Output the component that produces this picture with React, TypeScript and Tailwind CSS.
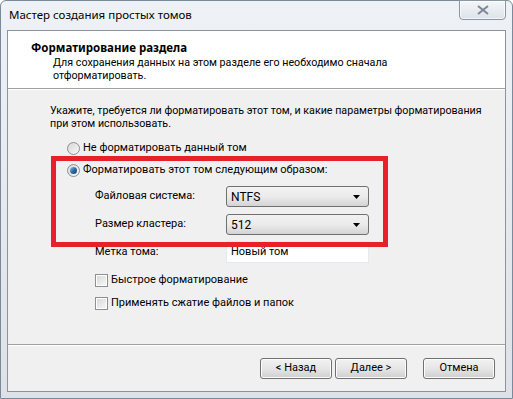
import React from "react";

const font = { fontFamily: 'Roboto, "Noto Sans", Arial, sans-serif' };
const capFont = { fontFamily: '"Noto Sans", "Open Sans", Arial, sans-serif' };

function Radio({ checked }: { checked?: boolean }) {
  return (
    <span className="relative flex h-[13px] w-[13px] shrink-0 items-center justify-center rounded-full border border-[#8e8f8f] bg-gradient-to-br from-[#d7d7d7] to-[#f8f8f8]">
      {checked && (
        <span className="h-[7px] w-[7px] rounded-full bg-gradient-to-br from-[#8fc2e6] via-[#2a6fa3] to-[#173f6b]" />
      )}
    </span>
  );
}

function Check() {
  return (
    <span className="flex h-[13px] w-[13px] shrink-0 items-center justify-center border border-[#8e8f8f] bg-white">
      <span className="h-[9px] w-[9px] bg-gradient-to-br from-[#d9d9d9] to-[#f7f7f7]" />
    </span>
  );
}

function Combo({ value }: { value: string }) {
  return (
    <div className="flex h-[21px] w-[143px] items-center justify-between rounded-[3px] border border-[#707070] bg-gradient-to-b from-[#f2f2f2] via-[#ebebeb] to-[#d4d4d4] pl-[4px] pr-[8px]">
      <span className="text-[12px] text-black">{value}</span>
      <svg width="7" height="4" viewBox="0 0 7 4">
        <path d="M0 0 H7 L3.5 4 Z" fill="#000" />
      </svg>
    </div>
  );
}

function Btn({ label }: { label: string }) {
  return (
    <div className="flex h-[21px] w-[72px] items-center justify-center rounded-[3px] border border-[#707070] bg-gradient-to-b from-[#f2f2f2] via-[#e6e6e6] to-[#cfcfcf] text-black shadow-[inset_0_0_0_1px_#fcfcfc]">
      {label}
    </div>
  );
}

export default function App() {
  return (
    <div style={font} className="h-[399px] w-[513px] overflow-hidden whitespace-nowrap bg-white text-[11px]">
      <div className="flex h-[399px] w-[513px] flex-col rounded-t-[6px] border border-[#7b8a9b] bg-gradient-to-b from-[#eef1f5] via-[#e6eaef] to-[#dde2e8]">
        <div className="flex h-[29px] shrink-0 items-start justify-between">
          <span style={capFont} className="pl-[8px] pt-[6px] text-[11.5px] leading-[16px] text-black">Мастер создания простых томов</span>
          <div className="mr-[6px] mt-[-1px] flex h-[20px] w-[47px] items-center justify-center rounded-b-[4px] border border-[#8b96a3] bg-gradient-to-b from-[#f4f6f8] to-[#dde3ea] shadow-[inset_0_0_0_1px_#ffffffaa]">
            <svg width="12" height="10" viewBox="0 0 12 10">
              <path d="M1 1 L11 9 M11 1 L1 9" stroke="#7d8793" strokeWidth="2" fill="none" />
            </svg>
          </div>
        </div>
        <div className="mx-[6px] mb-[6px] flex flex-1 flex-col border border-[#8d939b] bg-[#f0f0f0]">
          <div className="flex h-[58px] shrink-0 flex-col border-b border-[#a0a0a0] bg-white pl-[23px] pt-[9px]">
            <div style={capFont} className="text-[11.5px] font-bold leading-[16px] text-black">Форматирование раздела</div>
            <div className="pl-[22px] text-[10.7px] leading-[13px] text-black">
              Для сохранения данных на этом разделе его необходимо сначала
              <br />
              отформатировать.
            </div>
          </div>
          <div className="flex flex-1 flex-col border-t border-white pl-[42px] pt-[14px] text-black">
            <div className="text-[10.7px] leading-[13px]">
              Укажите, требуется ли форматировать этот том, и какие параметры форматирования
              <br />
              при этом использовать.
            </div>
            <div className="mt-[11px] flex items-center gap-[3px] pl-[17px]">
              <Radio />
              <span className="leading-[14px]">Не форматировать данный том</span>
            </div>
            <div className="relative mt-[8px] flex flex-col pl-[17px]">
              <div className="pointer-events-none absolute left-[1px] top-[-7px] h-[91px] w-[337px] border-[5px] border-[#e8202a]" />
              <div className="flex items-center gap-[3px]">
                <Radio checked />
                <span className="leading-[14px]">Форматировать этот том следующим образом:</span>
              </div>
              <div className="mt-[9px] flex items-center pl-[28px]">
                <span className="w-[131px]">Файловая система:</span>
                <Combo value="NTFS" />
              </div>
              <div className="mt-[7px] flex items-center pl-[28px]">
                <span className="w-[131px]">Размер кластера:</span>
                <Combo value="512" />
              </div>
              <div className="mt-[6px] flex items-center pl-[28px]">
                <span className="w-[131px]">Метка тома:</span>
                <div className="flex h-[22px] w-[143px] items-center border border-[#e3e9ef] bg-white pl-[4px]">Новый том</div>
              </div>
              <div className="mt-[9px] flex h-[17px] items-center gap-[3px] pl-[28px]">
                <Check />
                <span>Быстрое форматирование</span>
              </div>
              <div className="mt-[6px] flex h-[17px] items-center gap-[3px] pl-[28px]">
                <Check />
                <span>Применять сжатие файлов и папок</span>
              </div>
            </div>
          </div>
          <div className="flex h-[47px] shrink-0 items-start justify-end gap-[3px] border-t border-[#a0a0a0] pr-[10px] pt-[13px] shadow-[inset_0_1px_0_#ffffff]">
            <Btn label="< Назад" />
            <Btn label="Далее >" />
            <div className="w-[10px]" />
            <Btn label="Отмена" />
          </div>
        </div>
      </div>
    </div>
  );
}
